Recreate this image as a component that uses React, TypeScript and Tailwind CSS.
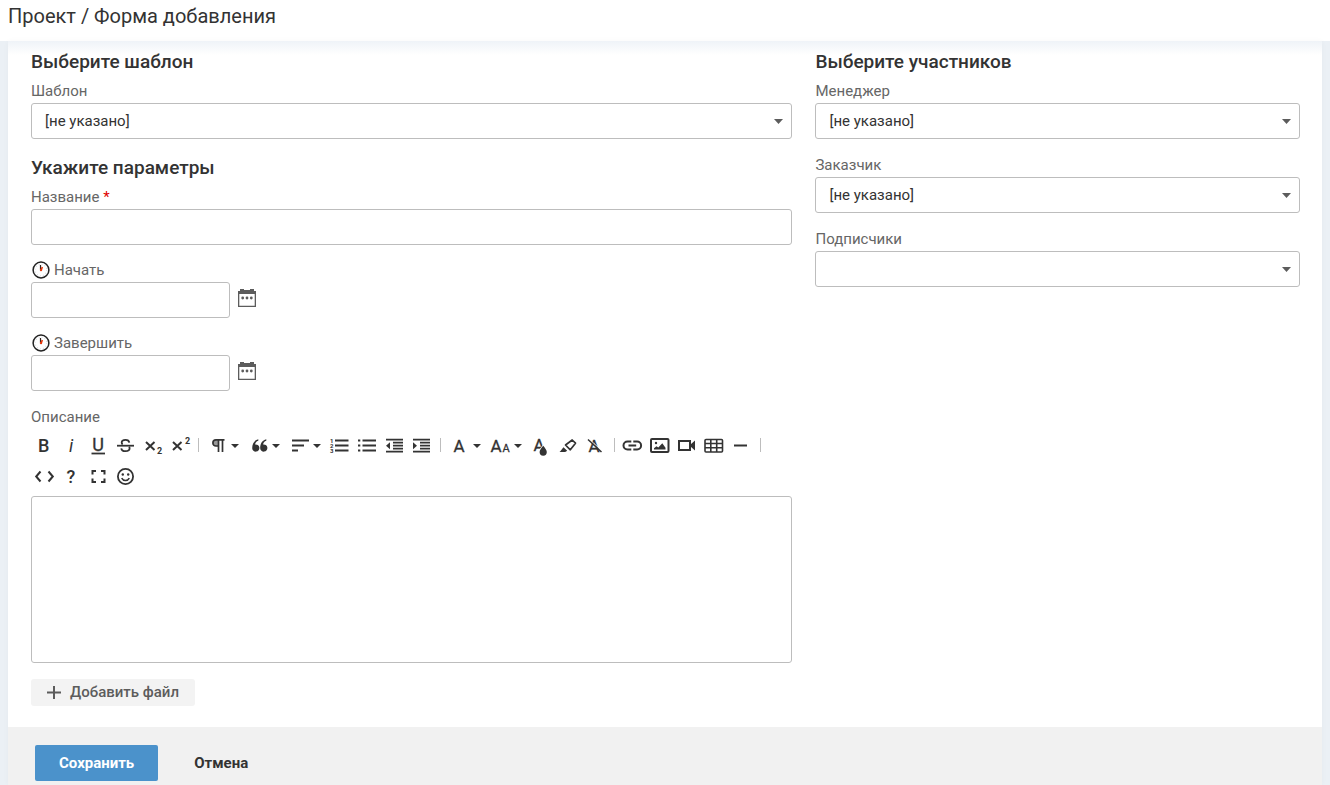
import React, { useState } from "react";

function Caret({ className }: { className?: string }) {
  return (
    <svg className={className} width="9" height="5" viewBox="0 0 9 5" aria-hidden="true">
      <path d="M0 0h9L4.500 5z" fill="currentColor" />
    </svg>
  );
}

function ClockIcon() {
  return (
    <svg width="20" height="20" viewBox="0 0 20 20" aria-hidden="true">
      <circle cx="10" cy="10" r="7.900" fill="#fff" stroke="#222" strokeWidth="1.500" />
      <circle cx="10" cy="10" r="5.800" fill="none" stroke="#d3d7dd" strokeWidth="1.200" strokeDasharray="0.800 2.237" />
      <path d="M9.500 9.500V5" stroke="#33261f" strokeWidth="1.200" />
      <path d="M10 10.800l1.300-3.800" stroke="#e5390f" strokeWidth="1.600" />
      <circle cx="10" cy="10" r="1.200" fill="#e5390f" />
    </svg>
  );
}

function CalendarIcon() {
  return (
    <svg width="18" height="18" viewBox="0 0 18 18" fill="#5c5c5c" aria-hidden="true">
      <path d="M0 2h2V0h4v1h6V0h4v2h2v16H0zM1.300 5v11.700h15.400V5z" fillRule="evenodd" />
      <circle cx="4.700" cy="9" r="1.400" />
      <circle cx="9" cy="9" r="1.400" />
      <circle cx="13.300" cy="9" r="1.400" />
    </svg>
  );
}

const line = { fill: "none", stroke: "currentColor", strokeWidth: 2 };

const icons: Record<string, React.ReactNode> = {
  bold: <text x="6" y="19" fontSize="18" fontWeight="500">B</text>,
  italic: <text x="12" y="19" fontSize="18" fontStyle="italic" textAnchor="middle">i</text>,
  underline: (
    <>
      <text x="12" y="18" fontSize="18" textAnchor="middle" stroke="currentColor" strokeWidth="0.300">U</text>
      <path d="M5.500 20.500h13.500" {...line} strokeWidth="1.800" />
    </>
  ),
  strike: (
    <g {...line} strokeWidth="1.800">
      <path d="M4 12.700h17" />
      <path d="M16.300 9.600C16 7.800 14.500 6.900 12.500 6.900c-2.200 0-3.800 1-3.800 2.700 0 .8.300 1.400.9 1.800M8.300 15.300c.2 1.900 1.900 2.900 4.200 2.900 2.400 0 4.100-1.100 4.100-2.900 0-.6-.2-1.100-.5-1.500" />
    </g>
  ),
  sub: (
    <>
      <path d="M6 9l8.500 8M14.500 9L6 17" {...line} />
      <text x="17" y="21" fontSize="9" fontWeight="700">2</text>
    </>
  ),
  sup: (
    <>
      <path d="M6 9l8.500 8M14.500 9L6 17" {...line} />
      <text x="18" y="11" fontSize="9" fontWeight="700">2</text>
    </>
  ),
  paragraph: (
    <>
      <path d="M13.500 6.800H11a3 3 0 0 0 0 6.200h2.500z" fillOpacity="0.500" />
      <path d="M19.500 6.800H11a3 3 0 0 0 0 6.200h2.500M13.500 6.800V19M17.500 6.800V19" {...line} strokeWidth="1.700" />
    </>
  ),
  quote: (
    <>
      <path d="M12.300 6.300v1.500c-2 .6-3 2-3.200 3.700a3.600 3.600 0 1 1-2.900 3.700c0-4.500 2.100-8 6.100-8.900z" />
      <path d="M20.300 6.300v1.500c-2 .6-3 2-3.200 3.700a3.600 3.600 0 1 1-2.900 3.700c0-4.500 2.100-8 6.100-8.900z" />
    </>
  ),
  align: <path d="M5 7.500h17M5 12.500h12M5 17.500h6" {...line} />,
  ol: (
    <>
      <path d="M7 7.500h13.500M7 12.500h13.500M7 17.500h13.500" {...line} />
      <text x="2" y="10" fontSize="6" fontWeight="700">1</text>
      <text x="2" y="15" fontSize="6" fontWeight="700">2</text>
      <text x="2" y="20" fontSize="6" fontWeight="700">3</text>
    </>
  ),
  ul: <path d="M3 7.500h2.300M3 12.500h2.300M3 17.500h2.300M7.500 7.500H21M7.500 12.500H21M7.500 17.500H21" {...line} />,
  outdent: (
    <>
      <path d="M4 6.700h17M11 9.700h10M11 12.700h10M11 15.700h10M4 18.700h17" {...line} strokeWidth="1.700" />
      <path d="M8 9.200v7L4 12.700z" />
    </>
  ),
  indent: (
    <>
      <path d="M4 6.700h17M11 9.700h10M11 12.700h10M11 15.700h10M4 18.700h17" {...line} strokeWidth="1.700" />
      <path d="M4 9.200v7l4-3.500z" />
    </>
  ),
  color: <text x="12" y="19" fontSize="17" textAnchor="middle" stroke="currentColor" strokeWidth="0.300">A</text>,
  size: (
    <>
      <text x="8" y="19" fontSize="17" textAnchor="middle" stroke="currentColor" strokeWidth="0.300">A</text>
      <text x="18" y="19" fontSize="11" textAnchor="middle" stroke="currentColor" strokeWidth="0.300">A</text>
    </>
  ),
  drop: (
    <>
      <text x="10" y="18" fontSize="17" textAnchor="middle" stroke="currentColor" strokeWidth="0.300">A</text>
      <path
        d="M14.200 12.800c1.700 2.200 3.600 4.200 3.600 6.300a3.600 3.600 0 0 1-7.200 0c0-2.100 1.900-4.100 3.600-6.300z"
        stroke="#fff"
        strokeWidth="1.500"
        paintOrder="stroke"
      />
    </>
  ),
  brush: (
    <>
      <path d="M9.500 12l6.700-5 3.300 3.200-5.200 6.600z" {...line} strokeWidth="1.700" strokeLinejoin="round" />
      <path d="M7.500 14.200l3.700 3.600c-1 1-1.800 1.200-3 1.200H3.500c1.500-1.200 2.500-3.300 4-4.800z" />
    </>
  ),
  clear: (
    <>
      <text x="11" y="19" fontSize="17" textAnchor="middle" stroke="currentColor" strokeWidth="0.300">A</text>
      <path d="M6 6l13 12" stroke="#fff" strokeWidth="1" />
      <path d="M5 6.500L18.500 19" {...line} strokeWidth="1.500" />
    </>
  ),
  link: (
    <path d="M10.300 8.500H6.500a4 4 0 0 0 0 8h3.800M12.300 8.500h3.800a4 4 0 0 1 0 8h-3.800M7.500 12.500h7.700" {...line} />
  ),
  image: (
    <>
      <rect x="3" y="6" width="17.500" height="13" rx="1" {...line} />
      <path d="M6 16.500v-1.200l2.500-2 1.800 1.200 4-4.200 3.200 4.500v1.700z" />
      <circle cx="8" cy="10" r="1.200" />
    </>
  ),
  video: (
    <>
      <rect x="4" y="8" width="11" height="9" {...line} />
      <path d="M15.500 11.500L20 7.500v10l-4.500-4z" />
    </>
  ),
  table: (
    <g {...line} strokeWidth="1.600">
      <rect x="3" y="6.500" width="17.500" height="12.500" rx="1" />
      <path d="M3 10.500h17.500M3 14.800h17.500M8.800 6.500V19M14.700 6.500V19" />
    </g>
  ),
  hr: <path d="M5 12.500h13" {...line} />,
  code: <path d="M8.500 7.500l-4.300 5 4.300 5M16.500 7.500l4.300 5-4.300 5" {...line} />,
  help: <text x="12" y="19" fontSize="18" fontWeight="500" textAnchor="middle">?</text>,
  fullscreen: <path d="M6.500 10.500V7H10M15 7h3.500v3.500M18.500 14.500V18H15M10 18H6.500v-3.500" {...line} />,
  smile: (
    <>
      <circle cx="12.500" cy="12.500" r="7.600" {...line} strokeWidth="1.800" />
      <circle cx="9.800" cy="10.500" r="1.200" />
      <circle cx="15.200" cy="10.500" r="1.200" />
      <path d="M8.700 14.200c.8 1.500 2.200 2.300 3.800 2.300s3-.8 3.800-2.300" {...line} strokeWidth="1.600" />
    </>
  ),
};

type Tool = { icon: string; title: string; menu?: boolean } | "sep";

const tools: Tool[] = [
  { icon: "bold", title: "Жирный" },
  { icon: "italic", title: "Курсив" },
  { icon: "underline", title: "Подчёркнутый" },
  { icon: "strike", title: "Зачёркнутый" },
  { icon: "sub", title: "Нижний индекс" },
  { icon: "sup", title: "Верхний индекс" },
  "sep",
  { icon: "paragraph", title: "Формат абзаца", menu: true },
  { icon: "quote", title: "Цитата", menu: true },
  { icon: "align", title: "Выравнивание", menu: true },
  { icon: "ol", title: "Нумерованный список" },
  { icon: "ul", title: "Маркированный список" },
  { icon: "outdent", title: "Уменьшить отступ" },
  { icon: "indent", title: "Увеличить отступ" },
  "sep",
  { icon: "color", title: "Шрифт", menu: true },
  { icon: "size", title: "Размер шрифта", menu: true },
  { icon: "drop", title: "Цвет текста" },
  { icon: "brush", title: "Цвет фона" },
  { icon: "clear", title: "Очистить форматирование" },
  "sep",
  { icon: "link", title: "Вставить ссылку" },
  { icon: "image", title: "Вставить изображение" },
  { icon: "video", title: "Вставить видео" },
  { icon: "table", title: "Вставить таблицу" },
  { icon: "hr", title: "Горизонтальная линия" },
  "sep",
  { icon: "code", title: "Исходный код" },
  { icon: "help", title: "Помощь" },
  { icon: "fullscreen", title: "На весь экран" },
  { icon: "smile", title: "Смайлы" },
];

function Toolbar() {
  return (
    <div role="toolbar" className="mt-1 flex flex-wrap pr-2 text-[#333]">
      {tools.map((t, i) =>
        t === "sep" ? (
          <span key={i} className="mx-[5px] mt-2 h-[14px] w-px bg-[#bdbdbd]" />
        ) : (
          <button
            key={i}
            type="button"
            aria-label={t.title}
            className={"flex h-[31px] items-start pt-[3px] pl-px " + (t.menu ? "w-[41px]" : "w-[27px]")}
          >
            <svg className="shrink-0" width="24" height="24" viewBox="0 0 24 24" fill="currentColor">
              {icons[t.icon]}
            </svg>
            {t.menu && (
              <svg className="mt-[11px] ml-[2px] shrink-0" width="8" height="4" viewBox="0 0 8 4">
                <path d="M0 0h8L4 4z" fill="currentColor" />
              </svg>
            )}
          </button>
        )
      )}
    </div>
  );
}

const labelCls = "mb-[3px] flex h-[18px] items-center text-[15px] leading-[18px] text-[#666]";
const boxCls = "block h-9 rounded-[3px] border border-[#bdbdbd] bg-white px-[13px] text-[15px] text-[#333]";

function SelectField({ id, label, empty }: { id: string; label: string; empty?: boolean }) {
  return (
    <div>
      <label htmlFor={id} className={labelCls}>{label}</label>
      <div className="relative">
        <select id={id} className={boxCls + " w-full appearance-none"}>
          <option>{empty ? "" : "[не указано]"}</option>
        </select>
        <Caret className="pointer-events-none absolute top-4 right-[9px] text-[#5c5c5c]" />
      </div>
    </div>
  );
}

function DateField({ id, label }: { id: string; label: string }) {
  const [value, setValue] = useState("");
  return (
    <div>
      <label htmlFor={id} className={labelCls + " gap-[3px]"}>
        <ClockIcon />
        {label}
      </label>
      <div className="flex items-center gap-2">
        <input id={id} value={value} onChange={(e) => setValue(e.target.value)} className={boxCls + " w-[199px]"} />
        <button type="button" aria-label="Выбрать дату" className="mb-1">
          <CalendarIcon />
        </button>
      </div>
    </div>
  );
}

function SectionTitle({ children }: { children: React.ReactNode }) {
  return <h2 className="mb-[9px] text-[19px] leading-[23px] font-medium text-[#333]">{children}</h2>;
}

export default function App() {
  return (
    <div className="flex min-h-screen flex-col bg-[#ebf0f5] font-['Roboto','Liberation_Sans',sans-serif]">
      <header className="bg-white px-2 pt-1 pb-[13px]">
        <h1 className="text-[20px] leading-6 text-[#333]">Проект / Форма добавления</h1>
      </header>
      <form
        onSubmit={(e) => e.preventDefault()}
        className="mx-2 flex flex-1 flex-col bg-[linear-gradient(#eff3f8,#fff_14px)] shadow-[0_0_6px_rgba(0,0,0,0.03)]"
      >
        <div className="grid grid-cols-[11fr_7fr] items-start gap-[23px] pt-[9px] pr-[22px] pb-[21px] pl-[23px]">
          <div className="flex flex-col gap-4">
            <section>
              <SectionTitle>Выберите шаблон</SectionTitle>
              <SelectField id="template" label="Шаблон" />
            </section>
            <section className="pt-px">
              <SectionTitle>Укажите параметры</SectionTitle>
              <label htmlFor="name" className={labelCls}>
                Название&nbsp;<span className="text-[#e00000]">*</span>
              </label>
              <input id="name" required className={boxCls + " w-full"} />
            </section>
            <DateField id="start" label="Начать" />
            <DateField id="finish" label="Завершить" />
            <div className="pt-px">
              <label htmlFor="description" className={labelCls}>Описание</label>
              <Toolbar />
              <textarea
                id="description"
                className="mt-1 block h-[167px] w-full resize-none rounded-[3px] border border-[#bdbdbd] bg-white p-3 text-[15px] text-[#333]"
              />
              <button
                type="button"
                className="mt-4 flex h-[27px] items-center gap-2 rounded-[3px] bg-[#f3f3f3] px-4 text-[15px] font-medium text-[#5c5c5c]"
              >
                <svg width="15" height="15" viewBox="0 0 15 15" aria-hidden="true">
                  <path d="M7 1v13M0 7.500h14" stroke="currentColor" strokeWidth="2" />
                </svg>
                Добавить файл
              </button>
            </div>
          </div>
          <div className="flex flex-col gap-[17px]">
            <section>
              <SectionTitle>Выберите участников</SectionTitle>
              <SelectField id="manager" label="Менеджер" />
            </section>
            <SelectField id="customer" label="Заказчик" />
            <SelectField id="subscribers" label="Подписчики" empty />
          </div>
        </div>
        <footer className="flex flex-1 items-start gap-3 bg-[#f1f1f1] px-[27px] pt-[18px] pb-1">
          <button type="submit" className="h-9 rounded-[2px] bg-[#4b92cb] px-6 text-[15px] font-bold text-white">
            Сохранить
          </button>
          <button type="button" className="h-9 px-6 text-[15px] font-bold text-[#333]">
            Отмена
          </button>
        </footer>
      </form>
    </div>
  );
}
